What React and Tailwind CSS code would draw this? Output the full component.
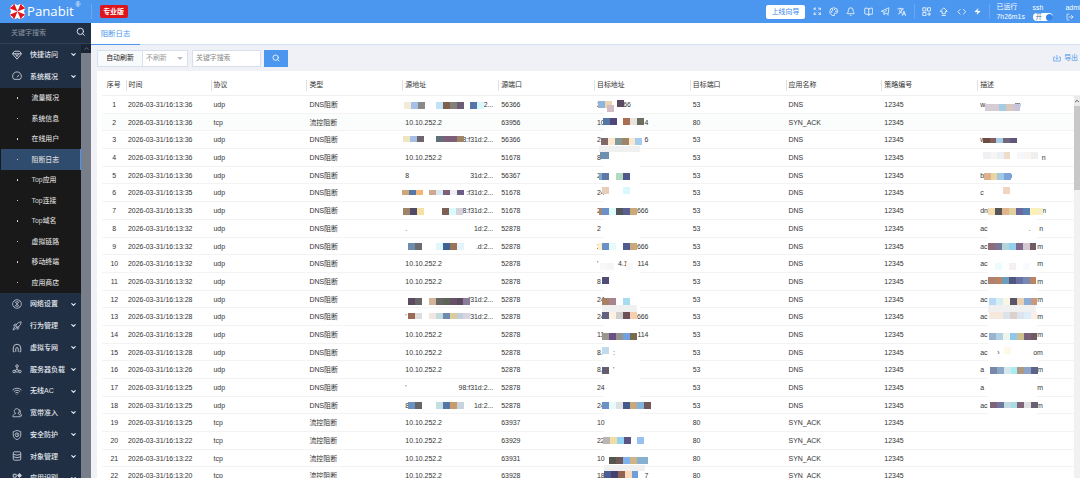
import React from "react";
import {
  Search, ChevronDown, ChevronUp, Rocket, Wifi,
  Palette, Bell, BookOpen, Code, Zap, LogOut,
} from "lucide-react";
import { MdTranslate } from "react-icons/md";

const glyph = (children, strokeWidth = 2) =>
  function Glyph({ className }) {
    return (
      <svg viewBox="0 0 24 24" className={className} fill="none" stroke="currentColor" strokeWidth={strokeWidth} strokeLinejoin="round">
        {children}
      </svg>
    );
  };

const Diamond = glyph(<path d="M6 3h12l5 6-11 13L1 9zM1 9h22M8 9l4 7 4-7" />, 2.4);
const Dial = glyph(<path d="M4.500 20a10.500 10.500 0 1 1 15 0zM12 15l5-6" />, 2.2);
const CrossCircle = glyph(<><circle cx="12" cy="12" r="10.500" /><path d="M6 6l12 12M18 6L6 18M9 4l3 4 3-4M9 20l3-4 3 4" /></>, 1.8);
const Arch = glyph(<path d="M3 21V12a9 9 0 0 1 18 0v9h-3M3 21h3M9 21v-7a3 3 0 0 1 6 0v7" />, 2.2);
const Balance = glyph(
  <>
    <circle cx="12" cy="5" r="3" />
    <circle cx="5" cy="18" r="3" />
    <circle cx="19" cy="18" r="3" />
    <path d="M12 8v5M12 13l-5 3M12 13l5 3M8 19h8" />
  </>, 2.2,
);
const Person = glyph(<path d="M9 13a6 6 0 1 1 5 0c4 1 6 4 6 8H2c0-4 3-7 7-8M17 4a5 5 0 0 1 2 8c2 1 4 4 4 8" />);
const ShieldRing = glyph(<><path d="M12 1l9 3v8c0 6-4 9-9 11-5-2-9-5-9-11V4z" /><circle cx="12" cy="11.500" r="4.500" /><path d="M12 9v3h2" /></>);
const Stack = glyph(<path d="M6 2h12a3 3 0 0 1 3 3v14a3 3 0 0 1-3 3H6a3 3 0 0 1-3-3V5a3 3 0 0 1 3-3zM3 8q9 4 18 0M3 14q9 4 18 0" />, 2.2);
const AppId = glyph(
  <>
    <path d="M3 3h7v7H3zM3 15h7v7H3zM15 15h7v7h-7z" />
    <path d="M18 1l5 5-5 5-5-5z" fill="currentColor" />
  </>, 2.4,
);
const Expand = glyph(<path d="M3 9V3h6M3 3l6 6M15 3h6v6M21 3l-6 6M3 15v6h6M3 21l6-6M21 15v6h-6M21 21l-6-6" />);
const GridPlus = glyph(<path d="M2 2h8v8H2zM14 2h8v8h-8zM2 14h8v8H2zM18 13v10M13 18h10" />);
const Horn = glyph(<path d="M1 11L21 2l-2 17-7-3-4 5v-7zM8 14l8-6M17 21l3 1" />);
const Upload = glyph(<path d="M12 2l9 9h-5v6H8v-6H3zM7 21.500h10" />);
const Export = glyph(<path d="M12 3v13M8 12l4 4 4-4M6 9H2v12h20V9h-4" />);

const TOP_ITEMS = [
  ["快捷访问", Diamond],
  ["系统概况", Dial],
];
const SUB_ITEMS = ["流量概况", "系统信息", "在线用户", "阻断日志", "Top应用", "Top连接", "Top域名", "虚拟链路", "移动终端", "应用商店"];

const BOTTOM_ITEMS = [
  ["网络设置", CrossCircle],
  ["行为管理", Rocket],
  ["虚拟专网", Arch],
  ["服务器负载", Balance],
  ["无线AC", Wifi],
  ["宽带准入", Person],
  ["安全防护", ShieldRing],
  ["对象管理", Stack],
  ["应用识别", AppId],
];

const COLUMNS = ["时间", "协议", "类型", "源地址", "源端口", "目标地址", "目标端口", "应用名称", "策略编号", "描述"];
const IP = { t: [[3, "10.10.252.2"]] };
const mk = (t, s = [], r) => ({ t, s, r });

// Each masked cell: t = [x, text] fragments, s = [x, y, height, colors] tiles, r = x of the trailing text's right edge.
const ROWS = [
  ["36", "udp", "56366", mk([], [[2, 5.5, 7, "#f3ead8 #a5c0e6 #8b8987"], [33.7, 5.5, 7, "#bfe2f7 #7d5f4e #83807a #6b5d76"], [67.5, 5.5, 7, "#5677a8 #d8f8fb"]], [91, ":2..."]),
    mk([[3, "2"]], [[4, 4.5, 7, "#8fb5de #ecd5ae"], [13.5, 9, 7, "#d3bcc4"], [23, 4, 7, "#5b4a60"]], [37, "66"]),
    mk([[3, "w"], [37.5, "m"]], [[8, 8, 7, "#d8ccd4 #d8ccd4 #a5cbe6 #dcc8ba #c8c4dc"]])],
  ["36", "tcp", "63956", IP,
    mk([[3, "10"]], [[9, 4.2, 7, "#5577a5 #50487c"], [29, 4.2, 7, "#a87050 #e8e4e0 #6b6e60"]], [54.5, "4"]), mk([])],
  ["36", "udp", "56366", mk([], [[0.7, 5, 5.3, "#efe6c0 #a3bfe3 #6f666c"], [33.7, 5, 5.3, "#5f7078 #7d5f78 #7d5f78 #a08468"]], [91, "8:f31d:2..."]),
    mk([[3, "2"]], [[5, 14.5, 6, "#f0f0f0 #f0f0f0 #f0f0f0 #f0f0f0 #f0f0f0 #f0f0f0"], [7, 7, 7, "#806864 #fbe6cf #859a98 #a08468 #fbe6cf #a5cdee"]], [54.5, "6"]),
    mk([[3, "w"]], [[5.5, 7, 5, "#704c40 #80605c #a5cbe6 #706878 #60587c"]])],
  ["36", "udp", "51678", IP, mk([[3, "8"]], [[6.5, 3.3, 7, "#6e8fad"], [8.5, 3.3, 7, "#6e8fad"]]),
    mk([[64.5, "n"]], [[5.7, 3.3, 7, "#eff0f3 #f6f4f5 #eceff3 #efdccb #ffffff #f6f7fa #fbf5f2 #efeff2"]])],
  ["36", "udp", "56367", mk([[3, "8"]], [], [91, "31d:2..."]),
    mk([[3, "2"]], [[5, 6.4, 7, "#7aabcf"], [8, 6.4, 7, "#6078a5"], [22, 6.4, 7, "#b5d9c0 #4f588a"]]),
    mk([[3, "b"], [31, "n"]], [[6.5, 6.4, 6.5, "#deb38c #e8d5a0 #a0c8e4 #7ca4d8"]])],
  ["35", "udp", "51678", mk([], [[0, 5.7, 5.3, "#cda67c #5677a8 #f4b57a"], [27, 5.7, 5.3, "#cfa890 #d8e9f6 #7d5f78 #f0f0f0 #6b5d86"]], [91, ":f31d:2..."]),
    mk([[3, "24"]], [[7.7, 2.7, 7, "#e8cdb8"], [29, 2.7, 7, "#d8f8fb"]]), mk([[3, "c"]], [[26.3, 3, 6.5, "#f0d5c0"]])],
  ["35", "udp", "51678", mk([], [[0.7, 6, 7, "#a08468 #504c68 #f8dfa5"], [39.7, 6, 7, "#7d5f54 #d8fbfb #d5d2dc"]], [91, "8:f31d:2..."]),
    mk([[3, "2"]], [[5, 5.5, 7, "#a8876c"], [8.5, 5.5, 7, "#6b90c8 #e0fbfb #55555c #5a6090 #c9a97c"]], [54.5, "666"]),
    mk([[3, "dn"], [63, "m"]], [[11, 6, 7, "#f3ddb0 #555555 #e0b48c #e4d09c #68689c #5880b0 #fbf0b8 #f8f0c0"]])],
  ["32", "udp", "52878", mk([[3, "."]], [], [91, "1d:2..."]), mk([[3, "2"]]), mk([[3, "ac"], [51.5, "."], [62, "n"]])],
  ["32", "udp", "52878", mk([], [[5.7, 5, 7, "#6e8cb0 #6c6c70"], [33.7, 5, 7, "#dff8fb #3f6294 #9a7258 #e5f3fc"]], [91, ".d:2..."]),
    mk([[3, "2"]], [[4.5, 5, 7, "#fbf0cc"], [8.5, 5, 7, "#6b90c8 #e8fbfb"], [29, 5, 7, "#505c90 #c9a97c"]], [54.5, "666"]),
    mk([[3, "ac"], [60, "m"]], [[11, 5, 7, "#8e6c78 #787898 #b5d5dc #94d0ee #80688c #d5c8d0 #705c64"]])],
  ["32", "udp", "52878", IP, mk([[3, "'"], [24, "4.1"]], [[6, 8, 6.5, "#f8f8fa #f5f5f8"], [32, 8, 6.5, "#f8f8fa"]], [54.5, "114"]),
    mk([[3, "ac"], [60, "m"]], [[18, 8, 6.5, "#ecfbfb #ffffff #f5efef #ffffff #f8fafc"]])],
  ["32", "udp", "52878", IP, mk([[3, "8"]], [[8, 4, 7, "#504c74"]]),
    mk([[3, "ac"], [60, "m"]], [[11, 4, 7, "#b08070 #b88468 #6f9cbc #50587c #6870a8 #7888b0 #b88468"]])],
  ["28", "udp", "52878", mk([], [[5.7, 7.5, 7, "#5b4a60 #67676a"], [26.7, 7.5, 7, "#d3b49a #666662 #5f6458 #66506a #5b4a60 #8a7d9a"]], [91, "f31d:2..."]),
    mk([[3, "24"]], [[8.5, 14.5, 7, "#f0f0f0 #f0f0f0 #f0f0f0 #f0f0f0 #f0f0f0"], [8.5, 7.5, 7, "#a88064 #a88490"], [29, 7.5, 7, "#a5dcee"]]),
    mk([[3, "ac"], [60, "m"]], [[11, 14.5, 7, "#f0f0f0 #f0f0f0 #f0f0f0 #f0f0f0 #f0f0f0 #f0f0f0 #f0f0f0"], [12, 7.5, 7, "#b8d8f4 #d5eff4 #fbf5e4 #5b5468 #e8cfb0 #8cacd8 #c89880"]])],
  ["28", "udp", "52878", mk([[3, "'"]], [[5.7, 4.5, 6.6, "#9a6a54 #dcdcdc"], [26.7, 4.5, 6.6, "#f2e6e0 #c2dbdc #6e8cb0 #dccb9c #c2cede #d8d5e0"]], [91, "f31d:2..."]),
    mk([[3, "24"]], [[8.5, 4, 7, "#626280 #fbf3e0 #cfcfcf #705058 #f6d0ae"]], [54.5, "666"]),
    mk([[3, "ac"], [60, "m"]], [[12, 4, 7, "#f5e8dd #f5e8dd #dce2ea #dcd0cc #dce4f0 #dfecfa #fbf0e8"]])],
  ["28", "udp", "52878", IP, mk([[3, "11"]], [[8.5, 7, 7, "#999690 #6b5088 #94948c #70a0e0 #7a6a50"]], [54.5, "114"]),
    mk([[3, "ac"], [60, "m"]], [[12, 7, 7, "#98b4d0 #b5d0e4 #ecf5e8 #90c8ec #ccc090 #786078 #6f5c60"]])],
  ["28", "udp", "52878", IP, mk([[3, "8."], [19, ":"]], [[8.5, 3.4, 7, "#c2dbec"]]),
    mk([[3, "ac"], [20, "›"], [56, "om"]], [[27, 3.4, 7, "#fdf8e8"]])],
  ["26", "udp", "52878", IP, mk([[3, "8."], [19, "'"]], [[8.5, 6, 7, "#665c70"]]),
    mk([[3, "a"], [60, "m"]], [[12.7, 6, 7, "#7888a8 #8ca8c8 #d5e8ec #a8ecf5 #b09880 #8ca4cc #5c6488"]])],
  ["25", "udp", "52878", mk([[3, "'"]], [], [91, "98:f31d:2..."]), mk([[3, "24"]]), mk([[3, "a"], [60, "m"]])],
  ["25", "udp", "52878", mk([[3, "8"]], [[5.7, 5.3, 7, "#6a91c0 #666668"], [33.7, 5.3, 7, "#c2dfe2 #5577a5 #c99a6c #c8d3e0"]], [91, "1d:2..."]),
    mk([[3, "24"]], [[8.5, 5.3, 7, "#6b90c8 #e8fbfb #e0e0e0 #44588c #c9a97c #7fb2dc #705858"]]),
    mk([[3, "ac"], [56, "om"]], [[12.7, 5.3, 6.5, "#806478 #7078a0 #c0dce0 #a8dce4 #806478 #e0e0e4 #686070"]])],
  ["25", "tcp", "63937", IP, mk([[3, "10"]]), mk([])],
  ["22", "tcp", "63929", IP, mk([[3, "22"]], [[9, 4.6, 7, "#bcb4b4 #f0dfa0 #94d2f4 #5b5480"], [43, 4.6, 7, "#98c0f0"]]), mk([])],
  ["22", "tcp", "63931", IP, mk([[3, "10"]], [[10, 15, 6, "#f0f0f0 #f0f0f0 #f0f0f0 #f0f0f0 #f0f0f0 #f0f0f0"], [15, 7.7, 7, "#555550 #6f5858 #7fb2ee #d0b488 #85b0d0"], [47.5, 7.7, 7, "#85b0d0"]]), mk([])],
  ["20", "tcp", "63928", IP, mk([[3, "18"]], [[10, 3.5, 7, "#4a5c90 #444070 #906450 #fbdcba #6e9fd8"]], [54.5, "7"]), mk([])],
];

function MaskedCell({ cell, mask }) {
  return (
    <div className="relative h-full">
      {mask}
      {cell.t.map(([x, text], i) => (
        <span key={i} className="absolute top-0" style={{ left: x }}>{text}</span>
      ))}
      {cell.r && <span className="absolute top-0 -translate-x-full" style={{ left: cell.r[0] }}>{cell.r[1]}</span>}
      {(cell.s || []).map(([x, y, h, colors], i) => (
        <div key={i} className="absolute z-10 flex" style={{ left: x, top: y, height: h }}>
          {colors.split(" ").map((c, j) => (
            <i key={j} className="block h-full w-[6.9px]" style={{ background: c }} />
          ))}
        </div>
      ))}
    </div>
  );
}

const GRID = "grid grid-cols-[23.5px_85px_95.9px_95.9px_95.9px_95.8px_95.8px_95.8px_95.8px_95.8px_1fr]";

function Table() {
  return (
    <div className="ml-[6px] flex-1 overflow-hidden bg-white pl-[5px] text-[6.95px] text-[#333]">
      <div className={GRID + " h-[25px] items-center border-b border-[#f0f0f0] pt-1"}>
        <span className="text-center">序号</span>
        {COLUMNS.map((c) => (
          <span key={c} className="flex h-[11px] items-center border-l border-[#e2e2e2] pt-px pl-[2px]">{c}</span>
        ))}
      </div>
      <div className="flex">
        <div className="min-w-0 flex-1">
          {ROWS.map(([sec, proto, port, src, dst, desc], i) => {
            const drop = proto === "tcp";
            return (
              <div key={i} className={GRID + " h-[17.7px] border-b border-[#f3f3f3] leading-[17.9px] " + (i === 1 ? "bg-[#fbfdfc]" : "")}>
                <span className="pl-px text-center">{i + 1}</span>
                <span className="pl-[2.5px]">2026-03-31/16:13:{sec}</span>
                <span className="pl-[3px]">{proto}</span>
                <span className="pl-[3px]">{drop ? "流控阻断" : "DNS阻断"}</span>
                <MaskedCell cell={src} />
                <span className="pl-[3px]">{port}</span>
                <MaskedCell cell={dst} mask={<div className="absolute top-0 left-[10px] h-[18px] w-[36px] bg-white" />} />
                <span className="pl-[3px]">{drop ? "80" : "53"}</span>
                <span className="pl-[3px]">{drop ? "SYN_ACK" : "DNS"}</span>
                <span className="pl-[3px]">12345</span>
                <MaskedCell cell={desc} mask={i > 5 && i < 18 ? <div className="absolute top-0 left-[11px] h-[18px] w-[49px] bg-white" /> : null} />
              </div>
            );
          })}
        </div>
        <div className="w-[6px] bg-[#f1f1f1]">
          <div className="flex h-[10px] items-center justify-center bg-[#eaeaea]">
            <ChevronUp className="size-[6px] text-[#555]" strokeWidth={4} />
          </div>
          <div className="h-[84px] bg-[#c8c8c8]" />
        </div>
      </div>
    </div>
  );
}

function MenuItem({ label, Icon }) {
  return (
    <div className="flex h-[21.75px] shrink-0 items-center pt-[0.5px] pl-[12px] text-[7px] font-medium text-[#e3e8ef]">
      <Icon className="size-[10px] text-[#c5ccd6]" />
      <span className="ml-[8px] flex-1 pt-px whitespace-nowrap">{label}</span>
      <ChevronDown className="mr-[4px] size-[7px]" strokeWidth={4} />
    </div>
  );
}

function Sidebar() {
  return (
    <aside className="flex w-[91px] shrink-0 flex-col overflow-hidden bg-[#202f44]">
      <div className="flex h-[20.5px] shrink-0 items-center justify-between border-b border-[#344154] pr-[5.5px] pl-[11px] text-[7px] text-[#8d96a3]">
        <span>关键字搜索</span>
        <Search className="mb-[3px] size-[9.5px] text-[#dfe5ec]" strokeWidth={2.4} />
      </div>
      <div className="flex min-h-0 flex-1">
        <div className="flex w-[81px] flex-col">
          {TOP_ITEMS.map(([label, Icon]) => <MenuItem key={label} label={label} Icon={Icon} />)}
          <div className="mt-[0.5px] shrink-0 bg-[#191919]">
            {SUB_ITEMS.map((label) => (
              <div
                key={label}
                className={"ml-px flex h-[20.55px] items-center pl-[15.5px] text-[6.9px] font-medium text-[#d8d8d8] " +
                  (label === "阻断日志" ? "border-r border-[#4b96ee] bg-[#2f4b6e]" : "")}
              >
                <i className="size-[1.6px] rounded-full bg-white" />
                <span className="ml-[13.5px] pt-px">{label}</span>
              </div>
            ))}
          </div>
          {BOTTOM_ITEMS.map(([label, Icon]) => <MenuItem key={label} label={label} Icon={Icon} />)}
        </div>
        <div className="w-[10px] bg-[#787f8b]">
          <div className="flex h-[9.5px] items-center justify-center bg-[#1b2433]">
            <ChevronUp className="size-[7px] text-[#8d96a3]" />
          </div>
        </div>
      </div>
    </aside>
  );
}

function Logo() {
  return (
    <svg viewBox="-10 -10 20 20" className="size-[17px]">
      <path d="M0 -7.500L3.700 -9.200L7 -7L9.200 -3.700L7.500 0L9.200 3.700L7 7L3.700 9.200L0 7.500L-3.700 9.200L-7 7L-9.200 3.700L-7.500 0L-9.200 -3.700L-7 -7L-3.700 -9.200Z" fill="#ffffff" />
      {[45, 135, 225, 315].map((a) => (
        <path key={a} transform={`rotate(${a})`} d="M0 0 L-3.9 -9.400 Q0 -7.500 3.9 -9.400Z" fill="#e0161c" />
      ))}
    </svg>
  );
}

const ICON = "size-[9.5px]";

function Header() {
  return (
    <header className="flex h-[23px] shrink-0 items-center overflow-hidden bg-[#4b96ee] pl-[9px] text-white">
      <Logo />
      <span className="ml-[1px] w-[48px] font-['Open_Sans',sans-serif] text-[13.2px] leading-none">Panabit</span>
      <span className="mb-[12px] ml-[0.5px] w-[7px] text-[6.5px] leading-none">®</span>
      <i className="ml-[8px] h-[15px] w-px bg-[#6ba8f1]" />
      <span className="ml-[8px] flex h-[12.5px] w-[28px] items-center justify-center rounded-[2px] bg-[#e0141b] pt-px text-[6.9px] leading-none font-bold">专业版</span>
      <div className="ml-auto flex w-[314px] shrink-0 items-center">
        <span className="flex h-[14px] w-[39px] shrink-0 items-center justify-center rounded-[2px] bg-white pt-px text-[6.9px] leading-none text-[#3585ea]">上线向导</span>
        <div className="ml-[8px] flex w-[94px] shrink-0 items-center justify-between">
          <Expand className="size-[8.5px]" />
          <Palette className={ICON} />
          <Bell className={ICON} />
          <BookOpen className={ICON} />
          <Horn className="size-[9px]" />
          <MdTranslate className={ICON} />
        </div>
        <i className="ml-[6.5px] h-[15px] w-px shrink-0 bg-[#6ba8f1]" />
        <div className="ml-[7px] flex w-[60px] shrink-0 items-center justify-between">
          <GridPlus className={ICON} />
          <Upload className={ICON} />
          <Code className={ICON} />
          <Zap className="h-[9px] w-[7px]" fill="currentColor" strokeWidth={1} />
        </div>
        <i className="ml-[7px] h-[15px] w-px shrink-0 bg-[#6ba8f1]" />
        <div className="ml-[7px] w-[36px] shrink-0 text-[6.9px] leading-[10.5px]">
          <div className="pt-px">已运行</div>
          <div>7h26m1s</div>
        </div>
        <div className="w-[33px] shrink-0 text-[6.9px]">
          <div className="leading-[11px]">ssh</div>
          <div className="flex h-[8px] w-[20.5px] items-center justify-between rounded-full bg-white pr-[0.5px] pl-[3px] text-[6.5px] leading-none text-[#3f72b0]">
            开<i className="size-[7px] rounded-full bg-[#3585ea]" />
          </div>
        </div>
        <div className="w-[18px] shrink-0 text-[6.9px] leading-[11px]">
          <div className="whitespace-nowrap">admin</div>
          <LogOut className="size-[8px]" />
        </div>
      </div>
    </header>
  );
}

export default function App() {
  return (
    <div className="flex h-[478px] w-[1080px] flex-col overflow-hidden bg-[#eff1f6] font-['Liberation_Sans','Noto_Sans_CJK_SC',sans-serif]">
      <Header />
      <div className="flex min-h-0 flex-1">
        <Sidebar />
        <main className="flex min-w-0 flex-1 flex-col">
          <div className="flex h-[21.5px] shrink-0 border-b border-[#d3e0f3] bg-white">
            <span className="-mb-px flex w-[49px] items-center justify-center border-b border-[#4b96ee] text-[7.4px] text-[#4b96ee]">阻断日志</span>
          </div>
          <div className="flex h-[26.5px] shrink-0 items-center pt-px pr-[2px] pl-[6px] text-[6.9px]">
            <div className="flex h-[17px] w-[91px] border border-[#d6e0ee] bg-white">
              <span className="flex w-[45px] items-center justify-center border-r border-[#d6e0ee] bg-[#f9fafb] text-[#222]">自动刷新</span>
              <span className="flex flex-1 items-center justify-between pr-[4px] pl-[3px] text-[#999]">
                不刷新
                <i className="border-x-[3px] border-t-[3px] border-x-transparent border-t-[#bbb]" />
              </span>
            </div>
            <div className="ml-[4px] flex h-[17px] w-[69px] items-center border border-[#d6e0ee] bg-white pl-[3px] text-[#888]">关键字搜索</div>
            <div className="ml-[3px] flex h-[17px] w-[24px] items-center justify-center bg-[#4b96ee] text-white">
              <Search className="size-[8px]" strokeWidth={2.5} />
            </div>
            <div className="ml-auto flex items-center gap-[3px] text-[#4b96ee]">
              <Export className="size-[8px]" />
              导出
            </div>
          </div>
          <Table />
        </main>
      </div>
    </div>
  );
}
